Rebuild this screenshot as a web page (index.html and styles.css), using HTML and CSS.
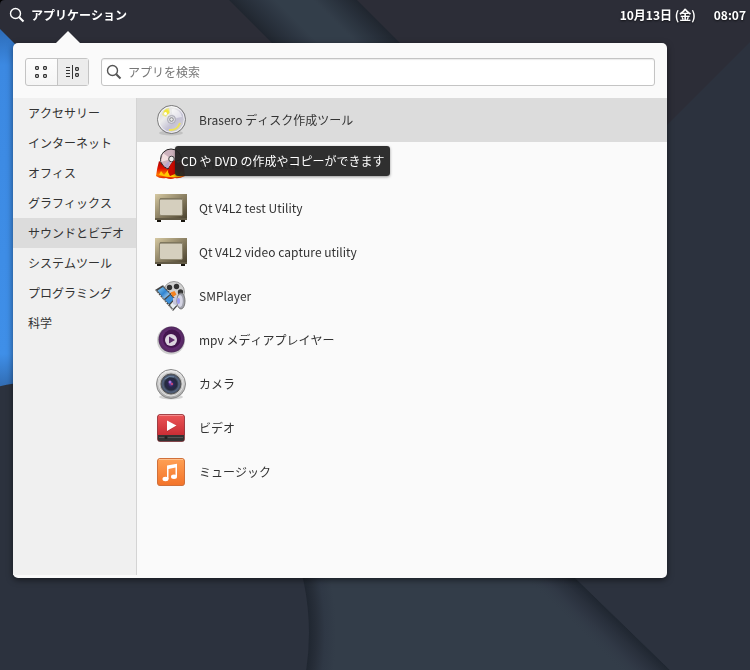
FILE: index.html
```html
<!DOCTYPE html>
<html lang="ja">
<head>
  <meta charset="UTF-8">
  <meta name="viewport" content="width=device-width, initial-scale=1.0">
  <title>アプリケーション</title>
  <link rel="stylesheet" href="styles.css">
</head>
<body>
  <!-- 壁紙 -->
  <svg class="wallpaper" viewBox="0 0 750 670" preserveAspectRatio="xMinYMin slice" aria-hidden="true">
    <defs>
      <linearGradient id="band" gradientUnits="userSpaceOnUse" x1="229" y1="0" x2="293" y2="-64">
        <stop offset="0" stop-color="#20262f"/>
        <stop offset=".14" stop-color="#28303b"/>
        <stop offset=".36" stop-color="#333e4a"/>
        <stop offset=".66" stop-color="#333e4a"/>
        <stop offset=".86" stop-color="#28303b"/>
        <stop offset="1" stop-color="#20262f"/>
      </linearGradient>
      <radialGradient id="disc" gradientUnits="userSpaceOnUse" cx="56" cy="633" r="280">
        <stop offset=".9" stop-color="#1f2630"/>
        <stop offset=".93" stop-color="#272e39"/>
        <stop offset=".96" stop-color="#2f3845"/>
        <stop offset="1" stop-color="#333d49"/>
      </radialGradient>
      <linearGradient id="slope" gradientUnits="userSpaceOnUse" x1="575" y1="578" x2="550" y2="604">
        <stop offset="0" stop-color="#1f2630"/>
        <stop offset=".3" stop-color="#29303c"/>
        <stop offset=".6" stop-color="#303845"/>
        <stop offset="1" stop-color="#333d49" stop-opacity="0"/>
      </linearGradient>
      <linearGradient id="blue" x1="0" y1="0" x2="0" y2="1">
        <stop offset="0" stop-color="#2d6cb8"/>
        <stop offset=".1" stop-color="#3c89e2"/>
        <stop offset=".9" stop-color="#3f8fe8"/>
        <stop offset="1" stop-color="#3069ae"/>
      </linearGradient>
    </defs>
    <rect width="750" height="670" fill="#2c323e"/>
    <path d="M0 0H750V42L625 167H0Z" fill="#2c2d37"/>
    <path d="M229 0H357L427 70H299Z" fill="url(#band)"/>
    <path d="M0 29L90 119V390H0Z" fill="url(#blue)"/>
    <path d="M200 500H495L670 670H200Z" fill="url(#disc)"/>
    <path d="M495 500L670 670H560L420 530Z" fill="url(#slope)"/>
    <circle cx="56" cy="633" r="253" fill="#2c323e"/>
    <path d="M495 500L670 670H750V500Z" fill="#2c323e"/>
    <path d="M0 0H5Q0 0 0 5Z" fill="#000"/>
  </svg>

  <!-- 32px のアプリアイコンで共有するグラデーションと図形 -->
  <svg class="defs" aria-hidden="true">
    <defs>
      <linearGradient id="disc-face" x1="0" y1="0" x2="1" y2="1">
        <stop offset="0" stop-color="#d0d0d0"/>
        <stop offset=".35" stop-color="#ececec"/>
        <stop offset=".6" stop-color="#c3c0d4"/>
        <stop offset="1" stop-color="#dededa"/>
      </linearGradient>
      <linearGradient id="tv-body" x1="0" y1="0" x2="1" y2="1">
        <stop offset="0" stop-color="#d6c9a2"/>
        <stop offset=".5" stop-color="#8b8063"/>
        <stop offset="1" stop-color="#463e2b"/>
      </linearGradient>
      <linearGradient id="flame" x1="0" y1="0" x2="0" y2="1">
        <stop offset="0" stop-color="#900000"/>
        <stop offset=".5" stop-color="#e01000"/>
        <stop offset=".8" stop-color="#ff7a00"/>
        <stop offset="1" stop-color="#d81000"/>
      </linearGradient>
      <linearGradient id="film" x1="0" y1="0" x2="1" y2="1">
        <stop offset="0" stop-color="#8fd0f5"/>
        <stop offset=".5" stop-color="#2f83d0"/>
        <stop offset="1" stop-color="#d4ecfa"/>
      </linearGradient>
      <radialGradient id="mpv-ring">
        <stop offset="0" stop-color="#3a1545"/>
        <stop offset=".6" stop-color="#4b1d58"/>
        <stop offset=".72" stop-color="#632a72"/>
        <stop offset="1" stop-color="#4f2a5b"/>
      </radialGradient>
      <linearGradient id="metal" x1="0" y1="0" x2="0" y2="1">
        <stop offset="0" stop-color="#f0f0f0"/>
        <stop offset="1" stop-color="#a4a4a4"/>
      </linearGradient>
      <radialGradient id="lens">
        <stop offset="0" stop-color="#7048b0"/>
        <stop offset=".3" stop-color="#28264f"/>
        <stop offset=".6" stop-color="#252b3d"/>
        <stop offset=".8" stop-color="#56657f"/>
        <stop offset="1" stop-color="#3d475c"/>
      </radialGradient>
      <linearGradient id="red" x1="0" y1="0" x2="0" y2="1">
        <stop offset="0" stop-color="#ec5658"/>
        <stop offset="1" stop-color="#c92e35"/>
      </linearGradient>
      <linearGradient id="orange" x1="0" y1="0" x2="0" y2="1">
        <stop offset="0" stop-color="#ffa154"/>
        <stop offset="1" stop-color="#f37329"/>
      </linearGradient>
      <symbol id="icon-tv" viewBox="0 0 32 32">
        <path d="M2 27h4v3H2zM26 27h4v3h-4z" fill="#17140d"/>
        <rect y="2" width="32" height="26" fill="url(#tv-body)"/>
        <rect y="26" width="32" height="2" fill="#625a45"/>
        <rect x="4.500" y="6.500" width="23" height="17" rx="1.500" fill="#d5cfbe" stroke="#8f876f"/>
        <path d="M5 7h22" stroke="#6f674f"/>
      </symbol>
      <symbol id="icon-search" viewBox="0 0 16 16">
        <circle cx="6.500" cy="6.500" r="5" fill="none" stroke="currentColor" stroke-width="1.400"/>
        <path d="M10.200 10.200L14.500 14.500" stroke="currentColor" stroke-width="2"/>
      </symbol>
    </defs>
  </svg>

  <header class="topbar">
    <button class="topbar-item" type="button">
      <svg class="icon-small"><use href="#icon-search"/></svg>
      アプリケーション
    </button>
    <div class="clock">
      <span>10月13日 (金)</span>
      <time>08:07</time>
    </div>
  </header>

  <main class="launcher">
    <div class="toolbar">
      <div class="view-switch">
        <button type="button" aria-label="グリッド表示">
          <svg class="icon-small" viewBox="0 0 16 16" fill="none" stroke="#333" stroke-width="1.200">
            <rect x="2.600" y="2.600" width="2.800" height="2.800" rx=".8"/>
            <rect x="10.600" y="2.600" width="2.800" height="2.800" rx=".8"/>
            <rect x="2.600" y="10.600" width="2.800" height="2.800" rx=".8"/>
            <rect x="10.600" y="10.600" width="2.800" height="2.800" rx=".8"/>
          </svg>
        </button>
        <button class="active" type="button" aria-label="カテゴリー表示" aria-pressed="true">
          <svg class="icon-small" viewBox="0 0 16 16" fill="none" stroke="#333">
            <path d="M1 3.500h4M1 6.500h4M1 9.500h4M1 12.500h4M7.500 1v14"/>
            <rect x="10.600" y="3.600" width="2.800" height="2.800" rx=".8" stroke-width="1.200"/>
            <rect x="10.600" y="9.600" width="2.800" height="2.800" rx=".8" stroke-width="1.200"/>
          </svg>
        </button>
      </div>
      <label class="search">
        <svg class="icon-small"><use href="#icon-search"/></svg>
        <input type="text" placeholder="アプリを検索" aria-label="アプリを検索">
      </label>
    </div>

    <div class="content">
      <nav class="categories">
        <button type="button">アクセサリー</button>
        <button type="button">インターネット</button>
        <button type="button">オフィス</button>
        <button type="button">グラフィックス</button>
        <button class="selected" type="button">サウンドとビデオ</button>
        <button type="button">システムツール</button>
        <button type="button">プログラミング</button>
        <button type="button">科学</button>
      </nav>

      <div class="apps">
        <button class="app selected" type="button">
          <svg class="icon" viewBox="0 0 32 32">
            <ellipse cx="16" cy="29" rx="12" ry="2.500" fill="#000" opacity=".12"/>
            <circle cx="16.500" cy="15.500" r="14" fill="url(#disc-face)" stroke="#777"/>
            <circle cx="16.500" cy="15.500" r="12.800" fill="none" stroke="#fff" opacity=".7"/>
            <path d="M7 11Q8 5 14 4L15 9Q12 10 11 13Z" fill="#ece78a"/>
            <circle cx="11.500" cy="8" r="2.500" fill="#f2e63c"/>
            <circle cx="10.500" cy="9.500" r="1.500" fill="#fff"/>
            <path d="M14 26Q22 27 25 19" fill="none" stroke="#ece15c" stroke-width="2"/>
            <path d="M17 5Q25 5 27 13L21 14Q20 11 17 10Z" fill="#fff" opacity=".5"/>
            <circle cx="16.500" cy="15.500" r="4" fill="#dcdce2" stroke="#a9a9b3"/>
            <circle cx="16.500" cy="15.500" r="1.800" fill="#eee" stroke="#888"/>
          </svg>
          Brasero ディスク作成ツール
          <span class="tooltip" role="tooltip">CD や DVD の作成やコピーができます</span>
        </button>
        <button class="app" type="button">
          <svg class="icon" viewBox="0 0 32 32">
            <path d="M4 13Q9 16 12 21L18 10L23 15L28 12L30 28Q24 31 20 30Q16 32 11 30Q5 31 1 28Q2 20 4 13Z" fill="url(#flame)"/>
            <path d="M4 27L6 23L9 27L13 22L15 28L21 22L24 27L27 23L28 28Q17 31 4 27Z" fill="#ffc800"/>
            <path d="M5.500 11.500A10.500 10.500 0 0 1 26.500 11.500L18 14L13 21Q6 18 5.500 11.500Z" fill="#ccb2bd" stroke="#222"/>
            <path d="M8 5L16 11L6 14Z" fill="#f3dfe0"/>
            <path d="M9 18L15 12L13 20Z" fill="#b6a6cc"/>
            <circle cx="16.500" cy="11" r="2.800" fill="#eee" stroke="#444"/>
            <path d="M13 24Q14 16 20 12V26L15 28Z" fill="#c80a00"/>
          </svg>
          Gnome CD Master
        </button>
        <button class="app" type="button">
          <svg class="icon"><use href="#icon-tv"/></svg>
          Qt V4L2 test Utility
        </button>
        <button class="app" type="button">
          <svg class="icon"><use href="#icon-tv"/></svg>
          Qt V4L2 video capture utility
        </button>
        <button class="app" type="button">
          <svg class="icon" viewBox="0 0 32 32">
            <circle cx="19" cy="12" r="10.500" fill="#d0d0d0" stroke="#999"/>
            <circle cx="14.500" cy="7.500" r="2.700" fill="#333"/>
            <circle cx="21.500" cy="6.500" r="2.700" fill="#333"/>
            <circle cx="25.500" cy="12" r="2.700" fill="#333"/>
            <path d="M0 10L8 5L25 23L18 31Z" fill="#444"/>
            <path d="M2.500 10.500L8 7L15 14L9 19Z" fill="url(#film)"/>
            <path d="M10 20L15.500 15L19 19L14 24Z" fill="#3d8fd8"/>
            <path d="M15 25L19.500 20L23 23.500L18 29Z" fill="#e6ecf0"/>
            <path d="M1 10.500L18 30M8 5.500L25 22.500" stroke="#eee" stroke-dasharray="1.500 1.500"/>
            <path d="M15.500 12.500l4-1.500 2 3.500-3.500 2.500z" fill="#f58220"/>
            <path d="M18 18l5-2v10l-5-2z" fill="#c7c7dc"/>
            <ellipse cx="26" cy="21" rx="4" ry="8" fill="#a0a2ac" stroke="#777"/>
            <ellipse cx="25" cy="21" rx="2.800" ry="6" fill="#d5d5e4"/>
            <ellipse cx="23.500" cy="21" rx="1.500" ry="3" fill="#9a9aee"/>
          </svg>
          SMPlayer
        </button>
        <button class="app" type="button">
          <svg class="icon" viewBox="0 0 32 32">
            <circle cx="16" cy="16.500" r="14" fill="#ccc"/>
            <circle cx="16.500" cy="15.500" r="13" fill="url(#mpv-ring)"/>
            <circle cx="17" cy="14.500" r="9" fill="#43164e"/>
            <circle cx="16" cy="16" r="6" fill="#ddd6e0"/>
            <path d="M14 12.500L20 16L14 19.500Z" fill="#5d2b69"/>
          </svg>
          mpv メディアプレイヤー
        </button>
        <button class="app" type="button">
          <svg class="icon" viewBox="0 0 32 32">
            <ellipse cx="16" cy="29" rx="12" ry="2.500" fill="#000" opacity=".15"/>
            <circle cx="16" cy="16" r="14.500" fill="url(#metal)" stroke="#888"/>
            <circle cx="16" cy="16" r="12" fill="#c2c2c2" stroke="#e0e0e0"/>
            <circle cx="16" cy="16" r="10" fill="url(#lens)" stroke="#555"/>
            <circle cx="15" cy="14" r="1.500" fill="#a774e0"/>
            <circle cx="17" cy="16" r="1" fill="#e04a70"/>
            <path d="M10 11Q14 7 19 9" fill="none" stroke="#7d9bbb" opacity=".7"/>
          </svg>
          カメラ
        </button>
        <button class="app" type="button">
          <svg class="icon" viewBox="0 0 32 32">
            <rect x="2.500" y="3" width="27" height="27" rx="2.500" fill="#000" opacity=".2"/>
            <rect x="2.500" y="2.500" width="27" height="27" rx="2.500" fill="#333"/>
            <path d="M2.500 23V5Q2.500 2.500 5 2.500H27Q29.500 2.500 29.500 5V23Z" fill="url(#red)"/>
            <path d="M4 3.500H28" stroke="#f48b8b"/>
            <path d="M4 25.500H28" stroke="#555"/>
            <circle cx="11" cy="25.500" r="1.500" fill="#222"/>
            <rect x="2.500" y="2.500" width="27" height="27" rx="2.500" fill="none" stroke="#8c1c25" opacity=".55"/>
            <path d="M12 9L21.500 14L12 20Z" fill="#8b1820" opacity=".4"/>
            <path d="M12 8.500L21.500 13.500L12 19Z" fill="#fff"/>
          </svg>
          ビデオ
        </button>
        <button class="app" type="button">
          <svg class="icon" viewBox="0 0 32 32">
            <rect x="2.500" y="3" width="27" height="27" rx="2.500" fill="#000" opacity=".2"/>
            <rect x="2.500" y="2.500" width="27" height="27" rx="2.500" fill="url(#orange)" stroke="#d0703a"/>
            <path d="M4 3.500H28" stroke="#ffc18d"/>
            <path d="M12 9.500L22 7.800V20.500H20.500V11.500L13.500 13V23H12Z" fill="#fff"/>
            <ellipse cx="10.500" cy="23" rx="3" ry="2.200" fill="#fff"/>
            <ellipse cx="19" cy="20.800" rx="3" ry="2.200" fill="#fff"/>
          </svg>
          ミュージック
        </button>
      </div>
    </div>
  </main>
</body>
</html>
```

FILE: styles.css
```css
* {
  box-sizing: border-box;
}
body {
  margin: 0;
  min-height: 100vh;
  display: flex;
  flex-direction: column;
  background: #2c323e;
  color: #333;
  font-family: "Noto Sans CJK JP", sans-serif;
  font-size: 12px;
  font-kerning: none;
  line-height: 18px;
}
button,
input {
  margin: 0;
  padding: 0;
  border: none;
  background: none;
  color: inherit;
  font: inherit;
}
.wallpaper {
  position: fixed;
  top: 0;
  left: 0;
  z-index: -1;
  width: 100%;
  height: 100%;
}
.defs {
  position: absolute;
  width: 0;
  height: 0;
}
.icon-small {
  flex: none;
  width: 16px;
  height: 16px;
}
.icon {
  flex: none;
  width: 32px;
  height: 32px;
}

/* 上部パネル */
.topbar {
  display: flex;
  justify-content: space-between;
  align-items: center;
  height: 30px;
  padding: 0 4px 0 9px;
  color: #fff;
  font-weight: bold;
  text-shadow: 0 1px 2px rgba(0, 0, 0, 0.6);
}
.topbar-item {
  display: flex;
  align-items: center;
  gap: 6px;
}
.clock {
  display: flex;
  gap: 18px;
}

/* ランチャー */
.launcher {
  position: relative;
  flex: 1;
  display: flex;
  flex-direction: column;
  margin: 13px 83px 92px 13px;
  padding-bottom: 3px;
  background: #fafafa;
  border-radius: 5px;
  box-shadow: 0 2px 6px rgba(0, 0, 0, 0.5);
}
.launcher::before {
  content: "";
  position: absolute;
  top: -12px;
  left: 43px;
  border: 12px solid transparent;
  border-top: none;
  border-bottom-color: #fafafa;
}
.toolbar {
  display: flex;
  gap: 12px;
  padding: 15px 12px 12px;
}
.view-switch {
  display: flex;
  width: 64px;
  height: 28px;
  border: 1px solid #c4c4c4;
  border-radius: 3px;
  background: linear-gradient(#fdfdfd, #f5f5f5);
}
.view-switch button {
  flex: 1;
  display: flex;
  align-items: center;
  justify-content: center;
}
.view-switch .active {
  background: #ececec;
  border-left: 1px solid #c4c4c4;
}
.search {
  flex: 1;
  display: flex;
  align-items: center;
  gap: 6px;
  height: 28px;
  padding: 0 4px;
  border: 1px solid #c4c4c4;
  border-radius: 3px;
  background: #fff;
  box-shadow: inset 0 1px 1px rgba(0, 0, 0, 0.08);
  color: #555;
}
.search input {
  flex: 1;
  min-width: 0;
  outline: none;
}
.search input::placeholder {
  color: #777;
  opacity: 1;
}
.content {
  flex: 1;
  display: flex;
}
.categories {
  display: flex;
  flex-direction: column;
  width: 124px;
  background: #f0f0f0;
  border-right: 1px solid #d4d4d4;
}
.categories button {
  height: 30px;
  padding-left: 15px;
  text-align: left;
  white-space: nowrap;
}
.categories .selected,
.apps .selected {
  background: #dcdcdc;
}
.apps {
  flex: 1;
  display: flex;
  flex-direction: column;
}
.app {
  position: relative;
  display: flex;
  align-items: center;
  gap: 12px;
  height: 44px;
  padding-left: 18px;
  text-align: left;
}
.tooltip {
  position: absolute;
  top: 48px;
  left: 38px;
  z-index: 1;
  padding: 6px;
  border-radius: 3px;
  background: rgba(36, 36, 36, 0.95);
  box-shadow: 0 1px 3px rgba(0, 0, 0, 0.4);
  color: #fff;
  white-space: nowrap;
}
```
